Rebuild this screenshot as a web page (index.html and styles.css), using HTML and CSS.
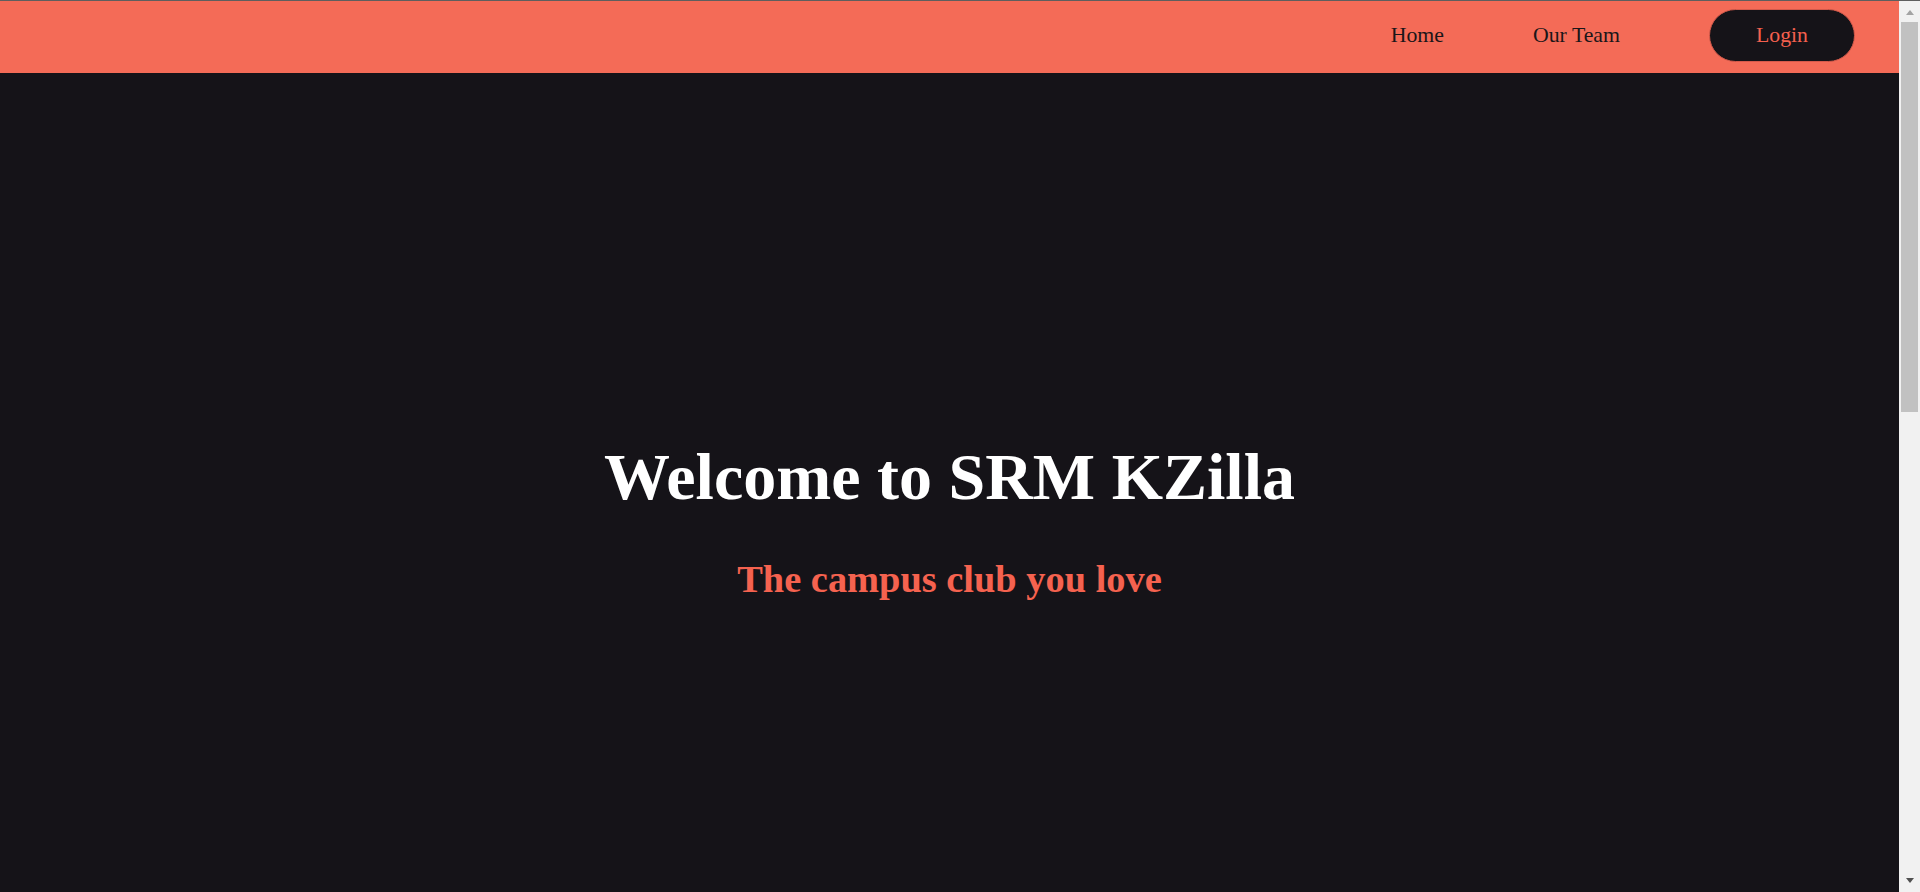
FILE: index.html
```html
<!DOCTYPE html>
<html lang="en">
<head>
<meta charset="utf-8">
<title>SRM KZilla</title>
<link rel="stylesheet" href="styles.css">
</head>
<body>
  <div class="page">
    <header class="navbar">
      <nav class="nav-links">
        <a class="nav-link" href="#">Home</a>
        <a class="nav-link" href="#">Our Team</a>
        <a class="login-btn" href="#">Login</a>
      </nav>
    </header>
    <main class="hero">
      <h1 class="hero-title">Welcome to SRM KZilla</h1>
      <h2 class="hero-subtitle">The campus club you love</h2>
    </main>
  </div>
  <div class="scrollbar" aria-hidden="true">
    <div class="sb-btn sb-up"><span class="arrow-up"></span></div>
    <div class="sb-thumb"></div>
    <div class="sb-fill"></div>
    <div class="sb-btn sb-down"><span class="arrow-down"></span></div>
  </div>
</body>
</html>
```
FILE: styles.css
```css
html {
  background: #151318;
}
::-webkit-scrollbar {
  width: 0;
  height: 0;
}
body {
  margin: 0;
  height: 892px;
  overflow: hidden;
  border-top: 1px solid #5e5e5e;
  box-sizing: border-box;
  background: #151318;
  font-family: "Liberation Serif", "Times New Roman", serif;
}
.page {
  margin-right: 21px;
}
.navbar {
  height: 72px;
  background: #f46b57;
  display: flex;
  justify-content: flex-end;
  align-items: center;
  padding-bottom: 3px;
  box-sizing: border-box;
}
.nav-links {
  display: flex;
  align-items: center;
  gap: 89px;
  margin-right: 44px;
}
.nav-link {
  color: #1a1619;
  text-decoration: none;
  font-size: 21.8px;
}
.login-btn {
  display: flex;
  align-items: center;
  justify-content: center;
  width: 146px;
  height: 53px;
  box-sizing: border-box;
  border-radius: 27px;
  background: #151318;
  border: 1px solid #d45a4b;
  color: #f4604e;
  text-decoration: none;
  font-size: 21.8px;
}
.hero {
  height: 819px;
  box-sizing: border-box;
  padding-top: 75px;
  display: flex;
  flex-direction: column;
  align-items: center;
  justify-content: center;
  text-align: center;
}
.hero-title {
  margin: 0 0 42px;
  color: #ffffff;
  font-size: 66px;
  font-weight: bold;
  line-height: normal;
}
.hero-subtitle {
  margin: 0;
  color: #f5624f;
  font-size: 38.4px;
  font-weight: bold;
  line-height: normal;
}

/* replica of the browser's vertical scrollbar, drawn over the right edge */
.scrollbar {
  position: fixed;
  top: 0;
  right: 0;
  width: 21px;
  height: 892px;
  box-sizing: border-box;
  border-top: 1px solid #5e5e5e;
  background: #f1f1f1;
  display: flex;
  flex-direction: column;
}
.sb-btn {
  height: 21px;
  flex: none;
  display: flex;
  justify-content: center;
  box-sizing: border-box;
}
.sb-up {
  height: 20px;
  padding-top: 9px;
}
.sb-down {
  padding-top: 7px;
}
.arrow-up {
  width: 0;
  height: 0;
  border-left: 4.5px solid transparent;
  border-right: 4.5px solid transparent;
  border-bottom: 5px solid #a3a3a3;
}
.arrow-down {
  width: 0;
  height: 0;
  border-left: 4.5px solid transparent;
  border-right: 4.5px solid transparent;
  border-top: 5px solid #505050;
}
.sb-thumb {
  flex: none;
  height: 390px;
  margin: 1px 2px 0;
  background: #c1c1c1;
}
.sb-fill {
  flex: 1;
}
```
